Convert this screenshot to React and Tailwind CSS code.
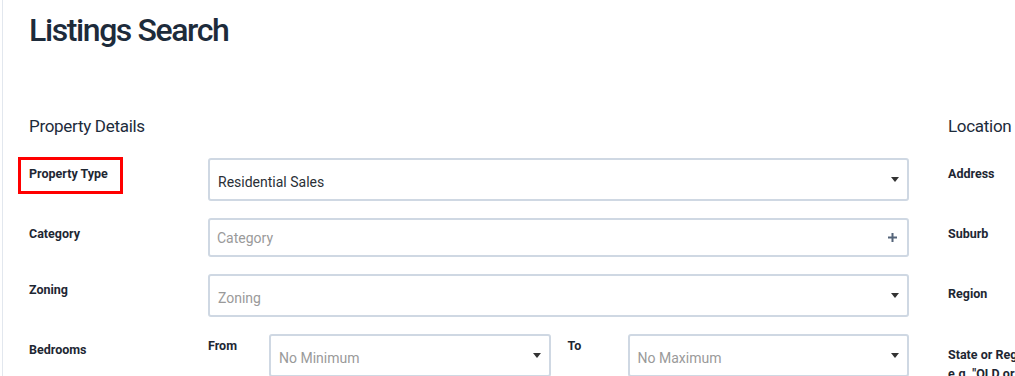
import React from 'react';

const Caret = () => (
  <svg width="8" height="5" viewBox="0 0 8 5" className="shrink-0">
    <path d="M0 0 L8 0 L4 5 Z" fill="#333" />
  </svg>
);

const Plus = () => (
  <svg width="9" height="9" viewBox="0 0 9 9" className="shrink-0">
    <path d="M3.5 0h2v3.5H9v2H5.5V9h-2V5.5H0v-2h3.5z" fill="#55657a" />
  </svg>
);

const Label = ({ children, highlight }) => (
  <div
    className={`inline-block border-[3px] pl-[8px] pr-[12px] pt-[6px] pb-[9px] text-[12.5px] leading-[16px] font-bold text-[#1e2733] ${
      highlight ? 'border-[#ff0000]' : 'border-transparent'
    }`}
  >
    {children}
  </div>
);

const Select = ({ value, placeholder, className = '' }) => (
  <div
    className={`h-[43px] flex items-center justify-between pl-[8px] pr-[8px] border-2 border-[#cfd8e3] rounded-[3px] bg-white text-[14px] ${className}`}
  >
    <span className={`pt-[5px] ${value ? 'text-[#2a2f36]' : 'text-[#9a9a9a]'}`}>{value || placeholder}</span>
    <Caret />
  </div>
);

const Row = ({ label, highlight, children }) => (
  <div className="flex items-start">
    <div className="w-[190px] shrink-0 -mt-[1px]">
      <Label highlight={highlight}>{label}</Label>
    </div>
    <div className="flex-1 min-w-0">{children}</div>
  </div>
);

export default function App() {
  return (
    <div
      className="w-[1015px] h-[376px] overflow-hidden bg-white"
      style={{ fontFamily: 'Roboto, "Liberation Sans", sans-serif' }}
    >
      <div className="ml-[2px] h-full border-l border-[#e2e7ee] pl-[15px]">
        <h1 className="ml-[11px] pt-[10px] text-[32px] leading-[40px] font-medium tracking-[-1.4px] text-[#1d2b3b]">
          Listings Search
        </h1>

        <div className="flex mt-[64px]">
          {/* Property Details */}
          <div className="w-[891px] shrink-0">
            <h2 className="ml-[11px] text-[17px] leading-[24px] tracking-[-0.3px] text-[#1d2b3b]">Property Details</h2>
            <div className="mt-[20px] flex flex-col gap-[17px]">
              <Row label="Property Type" highlight>
                <Select value="Residential Sales" />
              </Row>
              <Row label="Category">
                <div className="h-[39px] flex items-center justify-between pl-[7px] pr-[10px] border-2 border-[#cfd8e3] rounded-[3px] text-[14px] text-[#9a9a9a]">
                  <span className="pt-[2px]">Category</span>
                  <Plus />
                </div>
              </Row>
              <Row label="Zoning">
                <Select placeholder="Zoning" className="pl-[7px]" />
              </Row>
              <Row label="Bedrooms">
                <div className="flex items-start">
                  <div className="w-[61px] shrink-0 text-[12.5px] leading-[16px] font-bold text-[#1e2733] pt-[4px]">From</div>
                  <Select placeholder="No Minimum" className="flex-1" />
                  <div className="w-[77px] shrink-0 pl-[17px] text-[12.5px] leading-[16px] font-bold text-[#1e2733] pt-[4px]">To</div>
                  <Select placeholder="No Maximum" className="flex-1" />
                </div>
              </Row>
            </div>
          </div>

          {/* Location */}
          <div className="ml-[39px] shrink-0 w-[300px]">
            <h2 className="text-[17px] leading-[24px] tracking-[-0.3px] text-[#1d2b3b]">Location</h2>
            <div className="mt-[20px] flex flex-col gap-[20px] text-[12.5px] leading-[16px] font-bold text-[#1e2733]">
              <div className="pt-[8px] h-[40px]">Address</div>
              <div className="pt-[8px] h-[40px]">Suburb</div>
              <div className="pt-[8px] h-[40px]">Region</div>
              <div className="pt-[8px] leading-[19px] -mt-[1px]">
                <div>State or Region</div>
                <div>e.g. "QLD or NSW"</div>
              </div>
            </div>
          </div>
        </div>
      </div>
    </div>
  );
}
